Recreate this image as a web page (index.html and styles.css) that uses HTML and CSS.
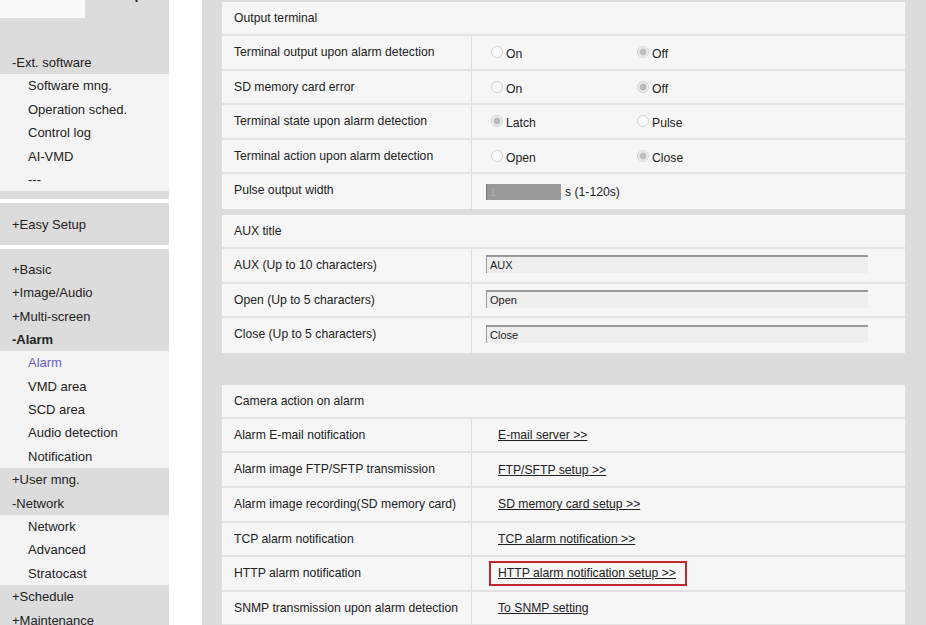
FILE: index.html
```html
<!DOCTYPE html>
<html lang="en">
<head>
    <meta charset="UTF-8">
    <title>Alarm - Output terminal</title>
    <link rel="stylesheet" href="styles.css">
</head>
<body>
<div class="menu">
    <div class="menu-top">
        <div class="menu-logo"></div>
        <div class="menu-cut"><span>Setup</span></div>
    </div>
    <div class="grp grp-ext">
        <div class="item">-Ext. software</div>
    </div>
    <div class="sub">
        <div class="item">Software mng.</div>
        <div class="item">Operation sched.</div>
        <div class="item">Control log</div>
        <div class="item">AI-VMD</div>
        <div class="item">---</div>
    </div>
    <div class="grp grp-pad"></div>
    <div class="grp grp-easy">
        <div class="item">+Easy Setup</div>
    </div>
    <div class="grp grp-main">
        <div class="item">+Basic</div>
        <div class="item">+Image/Audio</div>
        <div class="item">+Multi-screen</div>
        <div class="item bold">-Alarm</div>
    </div>
    <div class="sub">
        <div class="item current">Alarm</div>
        <div class="item">VMD area</div>
        <div class="item">SCD area</div>
        <div class="item">Audio detection</div>
        <div class="item">Notification</div>
    </div>
    <div class="grp">
        <div class="item">+User mng.</div>
        <div class="item">-Network</div>
    </div>
    <div class="sub">
        <div class="item">Network</div>
        <div class="item">Advanced</div>
        <div class="item">Stratocast</div>
    </div>
    <div class="grp">
        <div class="item">+Schedule</div>
        <div class="item">+Maintenance</div>
    </div>
</div>

<div class="content">
    <div class="panel">
        <div class="head">Output terminal</div>
        <div class="row">
            <div class="label">Terminal output upon alarm detection</div>
            <div class="value">
                <span class="opt"><i class="radio"></i>On</span>
                <span class="opt"><i class="radio on"></i>Off</span>
            </div>
        </div>
        <div class="row">
            <div class="label">SD memory card error</div>
            <div class="value">
                <span class="opt"><i class="radio"></i>On</span>
                <span class="opt"><i class="radio on"></i>Off</span>
            </div>
        </div>
        <div class="row">
            <div class="label">Terminal state upon alarm detection</div>
            <div class="value">
                <span class="opt"><i class="radio on"></i>Latch</span>
                <span class="opt"><i class="radio"></i>Pulse</span>
            </div>
        </div>
        <div class="row">
            <div class="label">Terminal action upon alarm detection</div>
            <div class="value">
                <span class="opt"><i class="radio"></i>Open</span>
                <span class="opt"><i class="radio on"></i>Close</span>
            </div>
        </div>
        <div class="row last">
            <div class="label">Pulse output width</div>
            <div class="value field">
                <span class="num">1</span>
                <span class="unit">s (1-120s)</span>
            </div>
        </div>
    </div>

    <div class="panel second">
        <div class="head">AUX title</div>
        <div class="row">
            <div class="label">AUX (Up to 10 characters)</div>
            <div class="value field"><span class="text">AUX</span></div>
        </div>
        <div class="row">
            <div class="label">Open (Up to 5 characters)</div>
            <div class="value field"><span class="text">Open</span></div>
        </div>
        <div class="row last">
            <div class="label">Close (Up to 5 characters)</div>
            <div class="value field"><span class="text">Close</span></div>
        </div>
    </div>

    <div class="panel third">
        <div class="head">Camera action on alarm</div>
        <div class="row">
            <div class="label">Alarm E-mail notification</div>
            <div class="value link"><a href="#">E-mail server &gt;&gt;</a></div>
        </div>
        <div class="row">
            <div class="label">Alarm image FTP/SFTP transmission</div>
            <div class="value link"><a href="#">FTP/SFTP setup &gt;&gt;</a></div>
        </div>
        <div class="row">
            <div class="label">Alarm image recording(SD memory card)</div>
            <div class="value link"><a href="#">SD memory card setup &gt;&gt;</a></div>
        </div>
        <div class="row">
            <div class="label">TCP alarm notification</div>
            <div class="value link"><a href="#">TCP alarm notification &gt;&gt;</a></div>
        </div>
        <div class="row">
            <div class="label">HTTP alarm notification</div>
            <div class="value link boxed"><span class="mark"><a href="#">HTTP alarm notification setup &gt;&gt;</a></span></div>
        </div>
        <div class="row">
            <div class="label">SNMP transmission upon alarm detection</div>
            <div class="value link"><a href="#">To SNMP setting</a></div>
        </div>
    </div>
</div>
</body>
</html>
```

FILE: styles.css
```css
body {
    margin: 0;
    display: flex;
    height: 625px;
    overflow: hidden;
    background-color: #fff;
    font-family: "Liberation Sans", Arial, sans-serif;
    font-size: 13px;
    color: #222;
}

/* left menu */
.menu {
    width: 169px;
    flex-shrink: 0;
}

.menu-top {
    display: flex;
    height: 18px;
    background-color: #dcdcdc;
    overflow: hidden;
}

.menu-logo {
    width: 85px;
    background-color: #fafafa;
}

.menu-cut {
    flex: 1;
    text-align: right;
    padding-right: 26px;
}

.menu-cut span {
    display: block;
    margin-top: -14px;
    font-size: 14px;
    font-weight: bold;
}

.grp {
    background-color: #dcdcdc;
}

.grp-ext {
    padding-top: 33px;
}

.grp-pad {
    height: 8px;
    margin-bottom: 4px;
}

.grp-easy {
    padding: 10px 0 8px;
    margin-bottom: 4px;
}

.grp-main {
    padding-top: 9px;
}

.sub {
    background-color: #f4f4f4;
}

.item {
    height: 23.4px;
    line-height: 23.4px;
    padding-left: 12px;
    white-space: nowrap;
}

.sub .item {
    padding-left: 28px;
}

.bold {
    font-weight: bold;
}

.current {
    color: #6b5fc4;
}

/* main area */
.content {
    margin-left: 33px;
    width: 683px;
    padding: 2px 21px 0 20px;
    background-color: #dcdcdc;
    font-size: 12.2px;
}

.panel {
    background-color: #f6f6f6;
}

.second {
    margin-top: 6px;
}

.third {
    margin-top: 32px;
}

.head {
    height: 32px;
    line-height: 32px;
    padding-left: 12px;
    border-bottom: 2px solid #e3e3e3;
}

.row {
    display: flex;
    height: 32.6px;
    border-bottom: 2px solid #e3e3e3;
}

.row.last {
    border-bottom: none;
    height: 34.6px;
}

.label {
    width: 237px;
    padding-left: 12px;
    line-height: 32.6px;
    white-space: nowrap;
    border-right: 1px solid #dedede;
}

.value {
    flex: 1;
    display: flex;
    align-items: center;
    padding-left: 19px;
    white-space: nowrap;
}

.opt {
    display: flex;
    align-items: center;
    width: 146px;
    padding-top: 4px;
}

.radio {
    width: 10px;
    height: 10px;
    border: 1px solid #d2d2d2;
    border-radius: 50%;
    background-color: #fafafa;
    margin-right: 3px;
    margin-top: -4px;
    box-sizing: content-box;
}

.radio.on {
    background: radial-gradient(circle, #bcbcbc 0, #bcbcbc 3px, #f0f0f0 4px);
}

.field {
    padding-left: 14px;
}

.num {
    width: 71px;
    height: 16px;
    line-height: 16px;
    padding-left: 3px;
    background-color: #999;
    border-left: 1px solid #777;
    color: #aaa;
    font-size: 11px;
}

.unit {
    margin-left: 4px;
}

.text {
    width: 378px;
    height: 16px;
    line-height: 17px;
    padding-left: 3px;
    background-color: #efefef;
    border-top: 2px solid #9a9a9a;
    border-left: 1px solid #9a9a9a;
    font-size: 11px;
    margin-top: -2px;
}

.link {
    padding-left: 26px;
}

.link a {
    color: #222;
}

.boxed {
    padding-left: 17px;
}

.mark {
    border: 2px solid #c1272d;
    padding: 3px 9px 4px 7px;
}
```
